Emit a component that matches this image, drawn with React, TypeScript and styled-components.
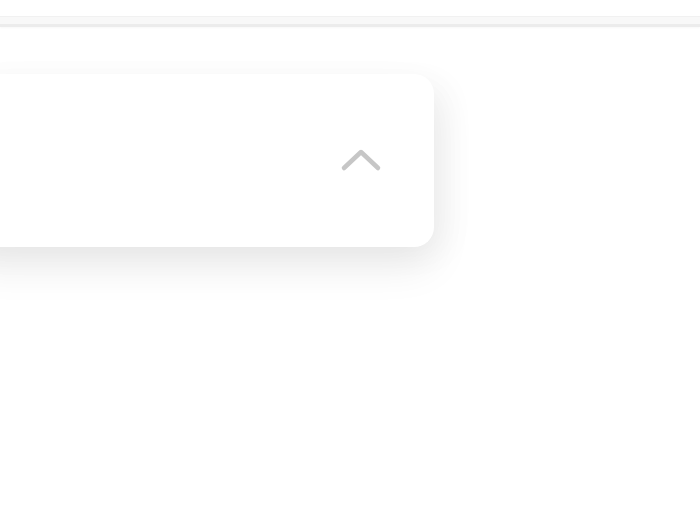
import * as React from "react";
import styled, { createGlobalStyle } from "styled-components";

const GlobalStyle = createGlobalStyle`
  html, body {
    margin: 0;
    padding: 0;
    background: #ffffff;
    font-family: "Liberation Sans", Arial, sans-serif;
  }
`;

const Page = styled.div`
  width: 700px;
  height: 525px;
  overflow: hidden;
  padding-top: 16px;
  box-sizing: border-box;
`;

const TopBar = styled.div`
  height: 7px;
  background: #f8f8f8;
  border-top: 1px solid #f1f1f1;
  border-bottom: 3px solid #ececec;
  box-shadow: 0 1px 2px rgba(0, 0, 0, 0.03);
`;

const Card = styled.div`
  margin-top: 47px;
  margin-left: -40px;
  width: 474px;
  height: 173px;
  background: #ffffff;
  border-radius: 20px;
  box-shadow: 0 20px 40px rgba(0, 0, 0, 0.08), 14px 8px 34px rgba(0, 0, 0, 0.035);
  display: flex;
  align-items: center;
  justify-content: flex-end;
  padding-right: 52px;
  box-sizing: border-box;
`;

const Toggle = styled.button`
  border: 0;
  background: none;
  padding: 0;
  width: 42px;
  height: 26px;
  display: flex;
  align-items: center;
  justify-content: center;
  cursor: pointer;
`;

const ChevronUp = () => (
  <svg width="42" height="26" viewBox="0 0 42 26" fill="none">
    <path
      d="M4 20 L21 4 L38 20"
      stroke="#c6c6c6"
      strokeWidth="4.5"
      strokeLinecap="round"
      strokeLinejoin="round"
    />
  </svg>
);

export default function App() {
  return (
    <Page>
      <GlobalStyle />
      <TopBar />
      <Card>
        <Toggle aria-label="Collapse">
          <ChevronUp />
        </Toggle>
      </Card>
    </Page>
  );
}
